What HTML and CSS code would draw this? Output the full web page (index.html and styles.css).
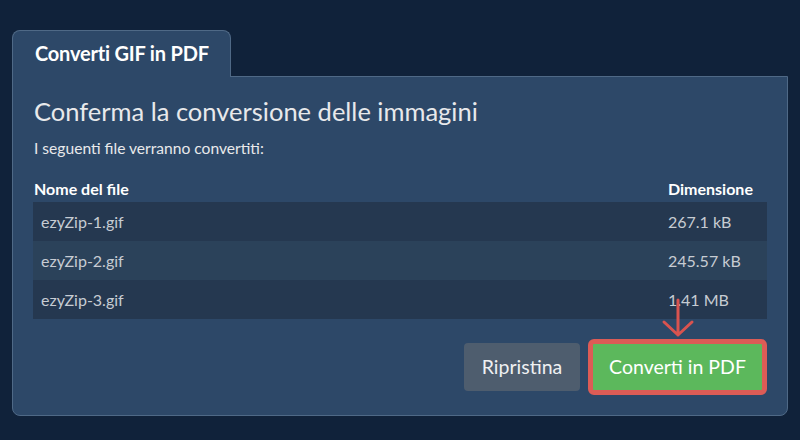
FILE: index.html
```html
<!DOCTYPE html>
<html lang="it">
<head>
<meta charset="utf-8">
<title>Converti GIF in PDF</title>
<link rel="stylesheet" href="styles.css">
</head>
<body>
<div class="wrap">
  <div class="tab">Converti GIF in PDF</div>
  <div class="panel">
    <h1 class="title">Conferma la conversione delle immagini</h1>
    <p class="sub">I seguenti file verranno convertiti:</p>
    <div class="table">
      <div class="row head"><div class="c-name">Nome del file</div><div class="c-size">Dimensione</div></div>
      <div class="row odd"><div class="c-name">ezyZip-1.gif</div><div class="c-size">267.1 kB</div></div>
      <div class="row even"><div class="c-name">ezyZip-2.gif</div><div class="c-size">245.57 kB</div></div>
      <div class="row odd"><div class="c-name">ezyZip-3.gif</div><div class="c-size">1.41 MB</div></div>
    </div>
    <div class="actions">
      <button class="btn reset">Ripristina</button>
      <button class="btn convert">Converti in PDF</button>
    </div>
    <svg class="arrow" width="36" height="40" viewBox="0 0 36 40">
      <path d="M18 2 V37 M4 24 L18 37 L32 24" fill="none" stroke="#d9534f" stroke-width="3" stroke-linecap="round" stroke-linejoin="round"/>
    </svg>
  </div>
</div>
</body>
</html>
```
FILE: styles.css
```css
html, body {
  margin: 0;
  padding: 0;
  background: #10223a;
  font-family: Lato, "Noto Sans", sans-serif;
}
.wrap {
  padding: 30px 12px 0 12px;
  display: flex;
  flex-direction: column;
  align-items: flex-start;
}
.tab {
  position: relative;
  z-index: 1;
  box-sizing: border-box;
  width: 219px;
  height: 47px;
  padding: 0 0 0 22px;
  line-height: 44px;
  background: #2d4868;
  border: 1px solid #4f6986;
  border-bottom: none;
  border-radius: 8px 8px 0 0;
  color: #ffffff;
  font-weight: 700;
  font-size: 20px;
  letter-spacing: -0.2px;
  margin-bottom: -1px;
}
.panel {
  position: relative;
  align-self: stretch;
  box-sizing: border-box;
  background: #2d4868;
  border: 1px solid #4f6986;
  border-radius: 0 0 8px 8px;
  padding: 19px 20px 20px 20px;
}
.title {
  margin: 0;
  font-weight: 400;
  font-size: 25.5px;
  line-height: 30px;
  color: #e8e9eb;
  padding-left: 1px;
}
.sub {
  margin: 13px 0 0 0;
  font-size: 15.6px;
  line-height: 19px;
  color: #e8e9eb;
  padding-left: 1px;
}
.table {
  margin-top: 21px;
  display: flex;
  flex-direction: column;
}
.row {
  display: grid;
  grid-template-columns: 1fr 99px;
  align-items: center;
}
.head {
  height: 23px;
  align-items: start;
  font-weight: 700;
  font-size: 16px;
  line-height: 19px;
  color: #ffffff;
}
.head .c-name { padding-left: 1px; }
.row.odd, .row.even {
  height: 39px;
  font-size: 16px;
  line-height: 19px;
  color: #c7ccd3;
}
.row.odd { background: #253850; }
.row.even { background: #2b425a; }
.row.odd .c-name, .row.even .c-name { padding-left: 8px; }
.actions {
  display: flex;
  justify-content: flex-end;
  align-items: center;
  gap: 8px;
  margin-top: 20px;
}
.btn {
  font-family: Lato, "Noto Sans", sans-serif;
  font-size: 19.5px;
  line-height: 22px;
  color: #eef0f2;
  cursor: pointer;
}
.reset {
  box-sizing: border-box;
  width: 116px;
  height: 48px;
  background: #4e5d6e;
  border: none;
  border-radius: 4px;
  padding: 0;
}
.convert {
  box-sizing: border-box;
  width: 179px;
  height: 56px;
  background: #5cb85c;
  border: 5px solid #dc5c56;
  border-radius: 6px;
  padding: 0;
  color: #ffffff;
}
.arrow {
  position: absolute;
  left: 647px;
  top: 221px;
}
```
